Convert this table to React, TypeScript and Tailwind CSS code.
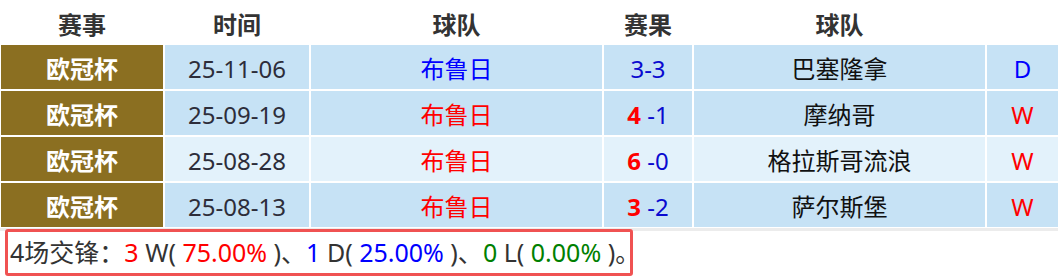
import React from 'react';

type Row = {
  date: string;
  home: string;
  homeWin: boolean;
  hs: number;
  as: number;
  away: string;
  result: 'W' | 'D' | 'L';
  light?: boolean;
};

const rows: Row[] = [
  { date: '25-11-06', home: '布鲁日', homeWin: false, hs: 3, as: 3, away: '巴塞隆拿', result: 'D' },
  { date: '25-09-19', home: '布鲁日', homeWin: true, hs: 4, as: 1, away: '摩纳哥', result: 'W' },
  { date: '25-08-28', home: '布鲁日', homeWin: true, hs: 6, as: 0, away: '格拉斯哥流浪', result: 'W', light: true },
  { date: '25-08-13', home: '布鲁日', homeWin: true, hs: 3, as: 2, away: '萨尔斯堡', result: 'W' },
];

const cell = 'flex h-[44px] items-center justify-center pt-[4px]';

export default function App() {
  return (
    <div
      className="w-[1058px] h-[280px] bg-white text-[24px] text-[#333]"
      style={{ fontFamily: '"Noto Sans", "Noto Sans CJK SC", sans-serif' }}
    >
      <div className="grid grid-cols-[162px_144px_291px_88px_291px_71px] gap-[2px] pl-px">
        <div className="flex h-[43px] items-center justify-center pt-[6px] font-bold">赛事</div>
        <div className="flex h-[43px] items-center justify-center pt-[6px] font-bold">时间</div>
        <div className="flex h-[43px] items-center justify-center pt-[6px] font-bold">球队</div>
        <div className="flex h-[43px] items-center justify-center pt-[6px] font-bold">赛果</div>
        <div className="flex h-[43px] items-center justify-center pt-[6px] font-bold">球队</div>
        <div className="h-[43px]" />

        {rows.map((r, i) => {
          const bg = r.light ? 'bg-[#e3f2fb]' : 'bg-[#c6e2f5]';
          return (
            <React.Fragment key={i}>
              <div className={`${cell} bg-[#8b6f21] font-bold text-white`}>欧冠杯</div>
              <div className={`${cell} ${bg} text-[#2d2d3a]`}>{r.date}</div>
              <div className={`${cell} ${bg} ${r.homeWin ? 'text-[#ff0000]' : 'text-[#0000ff]'}`}>
                {r.home}
              </div>
              <div className={`${cell} ${bg} text-[#0a0ad0]`}>
                {r.homeWin ? (
                  <>
                    <span className="font-bold text-[#ff0000]">{r.hs}</span>
                    <span>&nbsp;-{r.as}</span>
                  </>
                ) : (
                  <span>
                    {r.hs}-{r.as}
                  </span>
                )}
              </div>
              <div className={`${cell} ${bg} text-[#111]`}>{r.away}</div>
              <div
                className={`${cell} ${bg} ${r.result === 'W' ? 'text-[#ff0000]' : 'text-[#0000ff]'}`}
              >
                {r.result}
              </div>
            </React.Fragment>
          );
        })}
      </div>

      <div className="mt-px border-t-[3px] border-[#ececec]">
        <div className="-mt-[2px] ml-[5px] inline-flex h-[47px] w-[628px] items-center rounded-[3px] border-[3px] border-[#f05252] bg-white pl-[2px] text-[25px] whitespace-pre">
          <span>4场交锋：</span>
          <span className="text-[#ff0000]">3</span>
          <span> W( </span>
          <span className="text-[#ff0000]">75.00%</span>
          <span> )、</span>
          <span className="text-[#0000ff]">1</span>
          <span> D( </span>
          <span className="text-[#0000ff]">25.00%</span>
          <span> )、</span>
          <span className="text-[#008000]">0</span>
          <span> L( </span>
          <span className="text-[#008000]">0.00%</span>
          <span> )。</span>
        </div>
      </div>
    </div>
  );
}
